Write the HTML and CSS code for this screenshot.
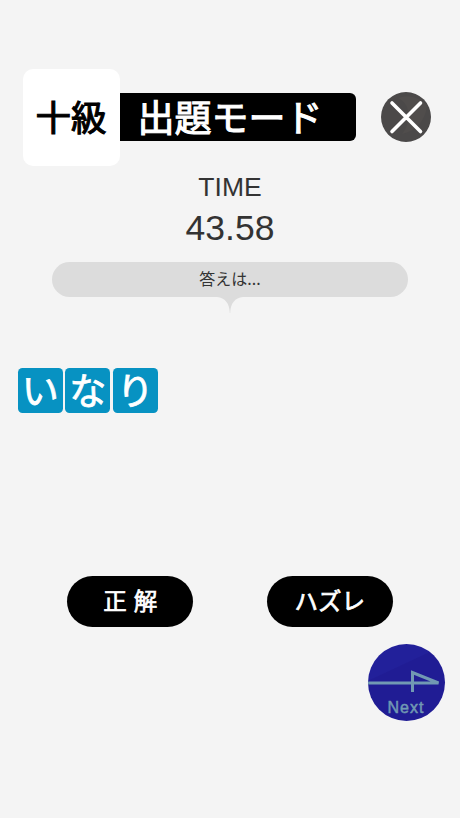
FILE: index.html
```html
<!DOCTYPE html>
<html lang="ja">
<head>
<meta charset="utf-8">
<title>出題モード</title>
<link rel="stylesheet" href="styles.css">
</head>
<body>
<main class="screen">
  <header class="header">
    <div class="grade"><span>十級</span></div>
    <h1 class="title"><span>出題モード</span></h1>
    <button class="close" aria-label="閉じる">
      <svg viewBox="0 0 50 50"><circle cx="25" cy="25" r="25" fill="#4b4949"/><path d="M17 6C30 12 31 30 21 42C35 39 44 29 46 14A25 25 0 0 0 17 6Z" fill="#504d4c"/><path d="M11 11L39.500 39.500M39.500 11L11 39.500" stroke="#fff" stroke-width="3.6" stroke-linecap="round"/></svg>
    </button>
  </header>
  <section class="timer">
    <div class="timer-label">TIME</div>
    <div class="timer-value">43.58</div>
  </section>
  <section class="prompt">
    <div class="bubble">答えは...</div>
    <svg class="tail" viewBox="0 0 26 16"><path d="M0 0H26C18 1 13.5 6 13.2 16H12.8C12.5 6 8 1 0 0Z" fill="#dcdcdc"/></svg>
  </section>
  <section class="tiles">
    <span class="tile">い</span><span class="tile">な</span><span class="tile">り</span>
  </section>
  <section class="answers">
    <button class="answer correct"><span>正</span><span>解</span></button>
    <button class="answer">ハズレ</button>
  </section>
  <footer class="footer">
    <button class="next">
      <svg viewBox="0 0 77 43"><path d="M0 39H70.500L44.500 28.500V48" fill="none" stroke="#7199b3" stroke-width="3" stroke-miterlimit="4"/></svg>
      <span>Next</span>
    </button>
  </footer>
</main>
</body>
</html>
```
FILE: styles.css
```css
* { box-sizing: border-box; }
body { margin: 0; background: #f4f4f4; color: #333; font-family: "Noto Sans CJK JP", sans-serif; }
button { border: 0; padding: 0; font: inherit; }
svg { display: block; }
.screen { width: 460px; height: 818px; overflow: hidden; display: flex; flex-direction: column; padding-top: 68.5px; }
.header { height: 97px; display: flex; align-items: center; padding-left: 22.5px; }
.grade { width: 97px; height: 97px; border-radius: 10px; background: #fff; color: #000; display: flex; align-items: center; justify-content: center; padding-bottom: 3px; font-size: 35.5px; line-height: 1; -webkit-text-stroke: 1.1px #000; }
.title { margin: 0; width: 236.5px; height: 47.5px; border-radius: 0 6px 6px 0; background: #000; color: #fff; display: flex; align-items: center; padding: 0 0 2px 18px; font-size: 37px; font-weight: 400; line-height: 1; -webkit-text-stroke: 1.1px #fff; }
.close { width: 50px; height: 50px; margin-left: 25px; border-radius: 50%; background: none; }
.close svg { width: 50px; height: 50px; }
.timer { margin-top: 6.5px; text-align: center; font-family: "Liberation Sans", sans-serif; }
.timer-label { height: 30px; line-height: 30px; font-size: 26.5px; }
.timer-value { height: 40px; margin-top: 6px; line-height: 40px; font-size: 35.5px; }
.prompt { margin-top: 14px; display: flex; flex-direction: column; align-items: center; }
.bubble { width: 356.5px; height: 35px; border-radius: 18px; background: #dcdcdc; text-align: center; line-height: 33px; font-size: 16px; }
.tail { width: 26px; height: 16px; }
.tiles { margin: 55px 0 0 18px; display: flex; gap: 2.8px; }
.tile { width: 44.7px; height: 44.7px; border-radius: 4.5px; background: #0792c2; color: #fff; display: flex; align-items: center; justify-content: center; padding-bottom: 2px; font-size: 37px; line-height: 1; -webkit-text-stroke: 0.8px #fff; }
.answers { margin-top: 163.3px; display: flex; justify-content: center; gap: 73.5px; }
.answer { width: 126px; height: 51px; border-radius: 26px; background: #000; color: #fff; display: flex; align-items: center; justify-content: center; padding-bottom: 2px; font-size: 23.5px; line-height: 1; -webkit-text-stroke: 0.7px #fff; }
.correct { gap: 7px; }
.footer { margin-top: 17.5px; display: flex; justify-content: flex-end; padding-right: 15.5px; }
.next { width: 77px; height: 77px; overflow: hidden; border-radius: 50%; display: flex; flex-direction: column; align-items: center; background: linear-gradient(155deg, #22209a 0 32%, #201c94 33% 100%); color: #7199b3; font-family: "Liberation Sans", sans-serif; font-size: 16px; line-height: 20px; letter-spacing: 1px; -webkit-text-stroke: 0.5px #7199b3; }
.next svg { width: 77px; height: 43px; margin-bottom: 11px; overflow: visible; flex: none; }
```
